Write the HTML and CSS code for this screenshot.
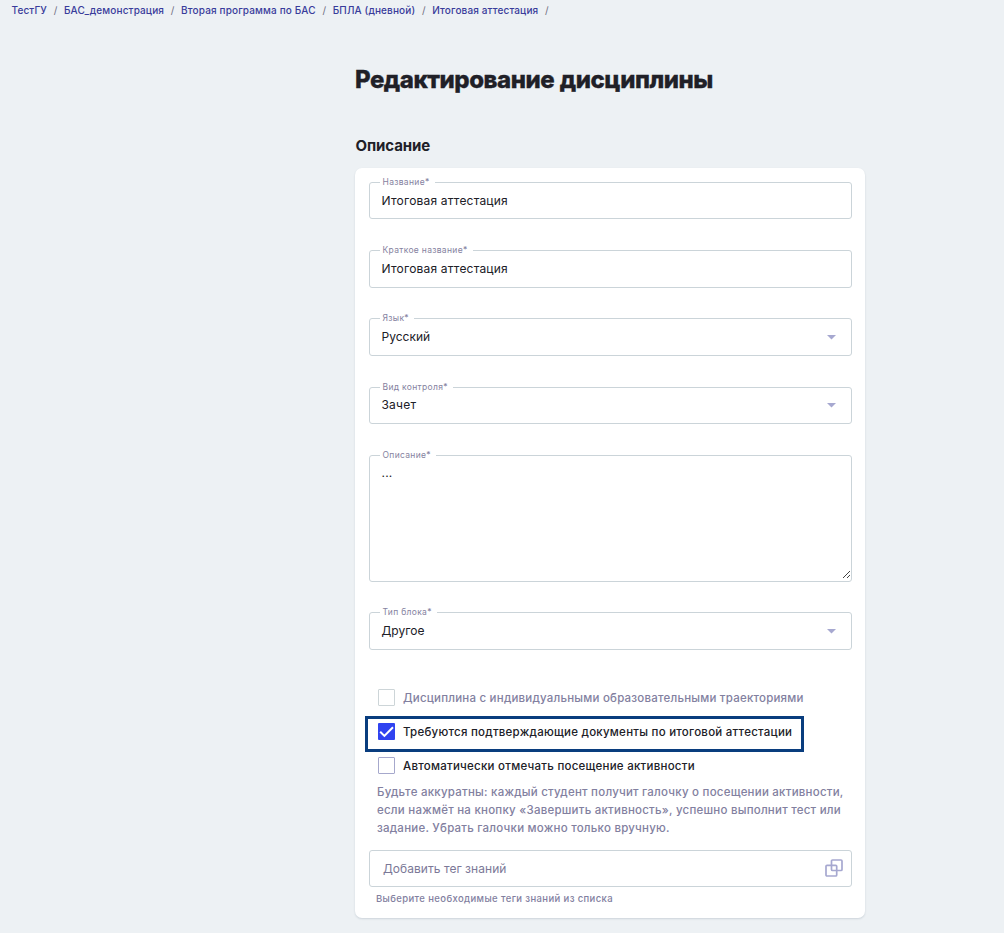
FILE: index.html
```html
<!DOCTYPE html>
<html lang="ru">
<head>
<meta charset="utf-8">
<title>Редактирование дисциплины</title>
<link rel="stylesheet" href="styles.css">
</head>
<body>
<nav class="crumbs">
  <a>ТестГУ</a><i>/</i><a>БАС_демонстрация</a><i>/</i><a>Вторая программа по БАС</a><i>/</i><a>БПЛА (дневной)</a><i>/</i><a>Итоговая аттестация</a><i>/</i>
</nav>
<main class="page">
  <h1 class="title">Редактирование дисциплины</h1>
  <h2 class="subtitle">Описание</h2>
  <form class="card">
    <div class="field short"><span class="label">Название*</span><span class="value">Итоговая аттестация</span></div>
    <div class="field"><span class="label">Краткое название*</span><span class="value">Итоговая аттестация</span></div>
    <div class="field language"><span class="label">Язык*</span><span class="value tight">Русский</span><svg class="arrow" viewBox="0 0 9 5"><path d="M0 0h9L4.5 4.5z"/></svg></div>
    <div class="field short"><span class="label">Вид контроля*</span><span class="value raised">Зачет</span><svg class="arrow" viewBox="0 0 9 5"><path d="M0 0h9L4.5 4.5z"/></svg></div>
    <div class="field area"><span class="label">Описание*</span><span class="value raised">...</span>
      <svg class="grip" viewBox="0 0 9 9"><path d="M1 8L8 1M5 8l3-3"/></svg></div>
    <div class="field"><span class="label">Тип блока*</span><span class="value tight">Другое</span><svg class="arrow" viewBox="0 0 9 5"><path d="M0 0h9L4.5 4.5z"/></svg></div>
    <div class="checks">
      <div class="check disabled"><span class="box"></span><span class="check-text">Дисциплина с индивидуальными образовательными траекториями</span></div>
      <div class="check marked"><span class="box on"><svg viewBox="0 0 17 17"><path d="M2.2 8.8l4.2 4.1L15 4.2"/></svg></span><span class="check-text">Требуются подтверждающие документы по итоговой аттестации</span></div>
      <div class="check"><span class="box"></span><span class="check-text">Автоматически отмечать посещение активности</span></div>
    </div>
    <p class="note">Будьте аккуратны: каждый студент получит галочку о посещении активности,<br>если нажмёт на кнопку «Завершить активность», успешно выполнит тест или<br>задание. Убрать галочки можно только вручную.</p>
    <div class="tag"><span>Добавить тег знаний</span>
      <svg class="copy" viewBox="0 0 18 18"><rect x="6.5" y="1" width="10.5" height="10.5" rx="1"/><rect x="1" y="6.3" width="10.7" height="10.7" rx="1"/></svg></div>
    <div class="hint">Выберите необходимые теги знаний из списка</div>
  </form>
</main>
</body>
</html>
```
FILE: styles.css
```css
*, *::after { box-sizing: border-box; }
body { margin: 0; height: 933px; overflow: hidden; background: #edf1f4; font-family: Inter, "Liberation Sans", sans-serif; color: #202027; }
.crumbs { display: flex; height: 21px; padding-left: 11.5px; font-size: 10px; line-height: 21px; font-weight: 500; letter-spacing: .14px; white-space: nowrap; color: #393c9b; }
.crumbs i { font-style: normal; font-weight: 400; color: #6d6d80; width: 17px; text-align: center; letter-spacing: 0; }
.page { width: 510px; margin-left: 355px; }
.title { margin: 43px 0 0; font-size: 24px; line-height: 32px; font-weight: 800; letter-spacing: -.49px; word-spacing: 1px; white-space: nowrap; -webkit-text-stroke: .3px #202027; }
.subtitle { margin: 40px 0 0; height: 32px; padding-left: .5px; font-size: 15px; line-height: 20px; font-weight: 700; letter-spacing: -.1px; }
.card { height: 750px; padding: 14px 13px 0 14px; background: #fff; border-radius: 7px; box-shadow: 0 1px 2px rgba(40, 60, 90, .16); }
.field { position: relative; display: flex; height: 38px; margin-bottom: 30px; padding: 0 15px 0 11.5px; border: 1px solid #cbd4d9; border-radius: 3px; }
.short { height: 37px; margin-bottom: 31px; }
.language { margin-bottom: 31px; }
.area { height: 127px; }
.label { position: absolute; left: 10px; top: -8px; padding: 0 5px 0 2.5px; background: #fff; font-size: 8.5px; line-height: 14px; color: #8582a0; letter-spacing: .32px; white-space: nowrap; }
.value { flex: 1; font-size: 12px; line-height: 36px; letter-spacing: .2px; }
.raised { line-height: 34px; }
.tight { letter-spacing: 0; }
.arrow { align-self: center; width: 9px; height: 5px; fill: #a6a8d0; }
.grip { position: absolute; right: 0; bottom: 2px; width: 9px; height: 9px; fill: none; stroke: #444; stroke-width: 1; }
.checks { display: flex; flex-direction: column; }
.check { display: flex; align-items: center; height: 34px; padding-left: 9px; font-size: 11.5px; font-weight: 500; letter-spacing: .25px; white-space: nowrap; }
.check-text { padding-top: 2px; }
.disabled { color: #8280a0; letter-spacing: .21px; }
.box { width: 17px; height: 17px; margin-right: 8px; border: 1px solid #a6a8cc; border-radius: 1px; }
.disabled .box { border-color: #cdd5d8; }
.box.on { border: 0; background: #3043f0; }
.box svg { display: block; fill: none; stroke: #fff; stroke-width: 2; }
.marked { position: relative; }
.marked::after { content: ""; position: absolute; left: -4px; top: 2px; width: 439px; height: 36px; border: 3px solid #093d7e; }
.note { margin: 1px 0 13px 8px; font-size: 11.5px; line-height: 18px; font-weight: 500; color: #8280a0; white-space: nowrap; letter-spacing: .23px; }
.tag { display: flex; align-items: center; justify-content: space-between; height: 37px; padding: 0 8px 0 13px; border: 1px solid #cbd4d9; border-radius: 3px; font-size: 12px; color: #7b7897; letter-spacing: .04px; }
.copy { width: 18px; height: 18px; margin-top: -2px; fill: none; stroke: #a6a8d0; stroke-width: 1.7; }
.hint { margin: 4px 0 0 7px; font-size: 9.5px; line-height: 16px; font-weight: 500; color: #8280a0; letter-spacing: .38px; }
```
